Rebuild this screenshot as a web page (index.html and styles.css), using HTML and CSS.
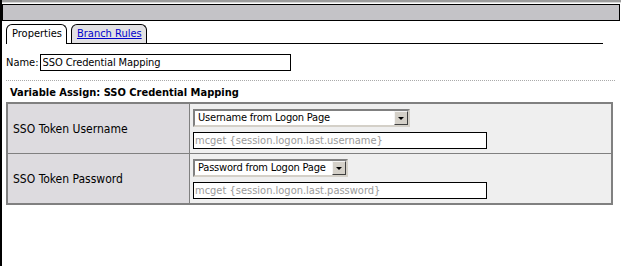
FILE: index.html
```html
<!DOCTYPE html>
<html lang="en">
<head>
    <meta charset="UTF-8">
    <title>Variable Assign</title>
    <link rel="stylesheet" href="styles.css">
</head>
<body>
    <div class="topbar">
        <div class="titlebar"></div>
    </div>
    <div class="tabs">
        <div class="tab active">Properties</div>
        <div class="tab"><a href="#">Branch Rules</a></div>
    </div>
    <div class="content">
        <div class="name-row">
            <label>Name:</label>
            <input type="text" class="name-input" value="SSO Credential Mapping">
        </div>
        <div class="section-title">Variable Assign: SSO Credential Mapping</div>
        <table class="assign">
            <tr>
                <td class="label-cell">SSO Token Username</td>
                <td class="value-cell">
                    <div class="field">
                        <div class="select select-wide">Username from Logon Page<span class="arrow"></span></div>
                        <input type="text" class="expr" placeholder="mcget {session.logon.last.username}">
                    </div>
                </td>
            </tr>
            <tr>
                <td class="label-cell">SSO Token Password</td>
                <td class="value-cell">
                    <div class="field">
                        <div class="select">Password from Logon Page<span class="arrow"></span></div>
                        <input type="text" class="expr" placeholder="mcget {session.logon.last.password}">
                    </div>
                </td>
            </tr>
        </table>
    </div>
</body>
</html>
```

FILE: styles.css
```css
html, body {
    margin: 0;
    height: 100%;
}
body {
    font-family: 'DejaVu Sans Condensed', 'Liberation Sans', sans-serif;
    font-size: 11px;
    color: #000;
    background: #fff;
    border-left: 2px solid #000;
    box-sizing: border-box;
}
.topbar {
    border-top: 2px solid #9c9c9c;
    padding-top: 2px;
    padding-right: 1px;
    background: linear-gradient(#d8d8d8, #d8d8d8) top / 100% 1px no-repeat;
}
.titlebar {
    height: 15px;
    border: 1px solid #000;
    background: #c4c3c7;
}
.tabs {
    display: flex;
    align-items: flex-end;
    gap: 4px;
    margin-top: 3px;
    margin-left: 4px;
    width: 597px;
    border-bottom: 1px solid #000;
}
.tab {
    height: 18px;
    line-height: 18px;
    padding: 0 4px 0 5px;
    border: 1px solid #000;
    border-bottom: none;
    border-radius: 6px 6px 0 0;
    background: #e2e1e4;
}
.tab.active {
    background: #fff;
    height: 19px;
    margin-bottom: -1px;
}
.tab a {
    color: #0000cc;
}
.content {
    padding: 10px 6px 0 4px;
}
.name-row {
    display: flex;
    align-items: center;
    gap: 1px;
}
.name-input {
    width: 251px;
    height: 17px;
    box-sizing: border-box;
    border: 1px solid #000;
    padding: 0 2px;
    font: inherit;
    letter-spacing: -0.1px;
}
.section-title {
    margin-top: 9px;
    border-top: 1px dotted #aaa;
    padding: 5px 0 0 4px;
    height: 16px;
    font-weight: bold;
}
.assign {
    width: 607px;
    border-collapse: collapse;
    border: 2px solid #808080;
}
.assign td {
    border: 1px solid #808080;
    padding: 0;
}
.label-cell {
    width: 176px;
    background: #dddbdf;
    padding-left: 5px !important;
    font-size: 12px;
}
.value-cell {
    background: #efefef;
    vertical-align: top;
}
.field {
    display: flex;
    flex-direction: column;
    align-items: flex-start;
    gap: 5px;
    padding: 5px 3px 4px 3px;
}
.select {
    position: relative;
    height: 18px;
    line-height: 14px;
    width: 155px;
    box-sizing: border-box;
    padding: 0 0 0 3px;
    background: #fff;
    border: 2px solid;
    border-color: #808080 #d4d0c8 #d4d0c8 #808080;
    letter-spacing: -0.2px;
}
.select-wide {
    width: 217px;
}
.arrow {
    position: absolute;
    right: 0;
    top: 0;
    width: 14px;
    height: 14px;
    box-sizing: border-box;
    background: #d4d0c8;
    border: 1px solid;
    border-color: #f4f4f4 #404040 #404040 #f4f4f4;
}
.arrow::after {
    content: "";
    position: absolute;
    left: 3px;
    top: 5px;
    border: 3px solid transparent;
    border-top: 3px solid #000;
    border-bottom: none;
}
.expr {
    width: 294px;
    height: 17px;
    box-sizing: border-box;
    border: 1px solid #000;
    padding: 0 1px;
    font: inherit;
}
.expr::placeholder {
    color: #999;
}
```
